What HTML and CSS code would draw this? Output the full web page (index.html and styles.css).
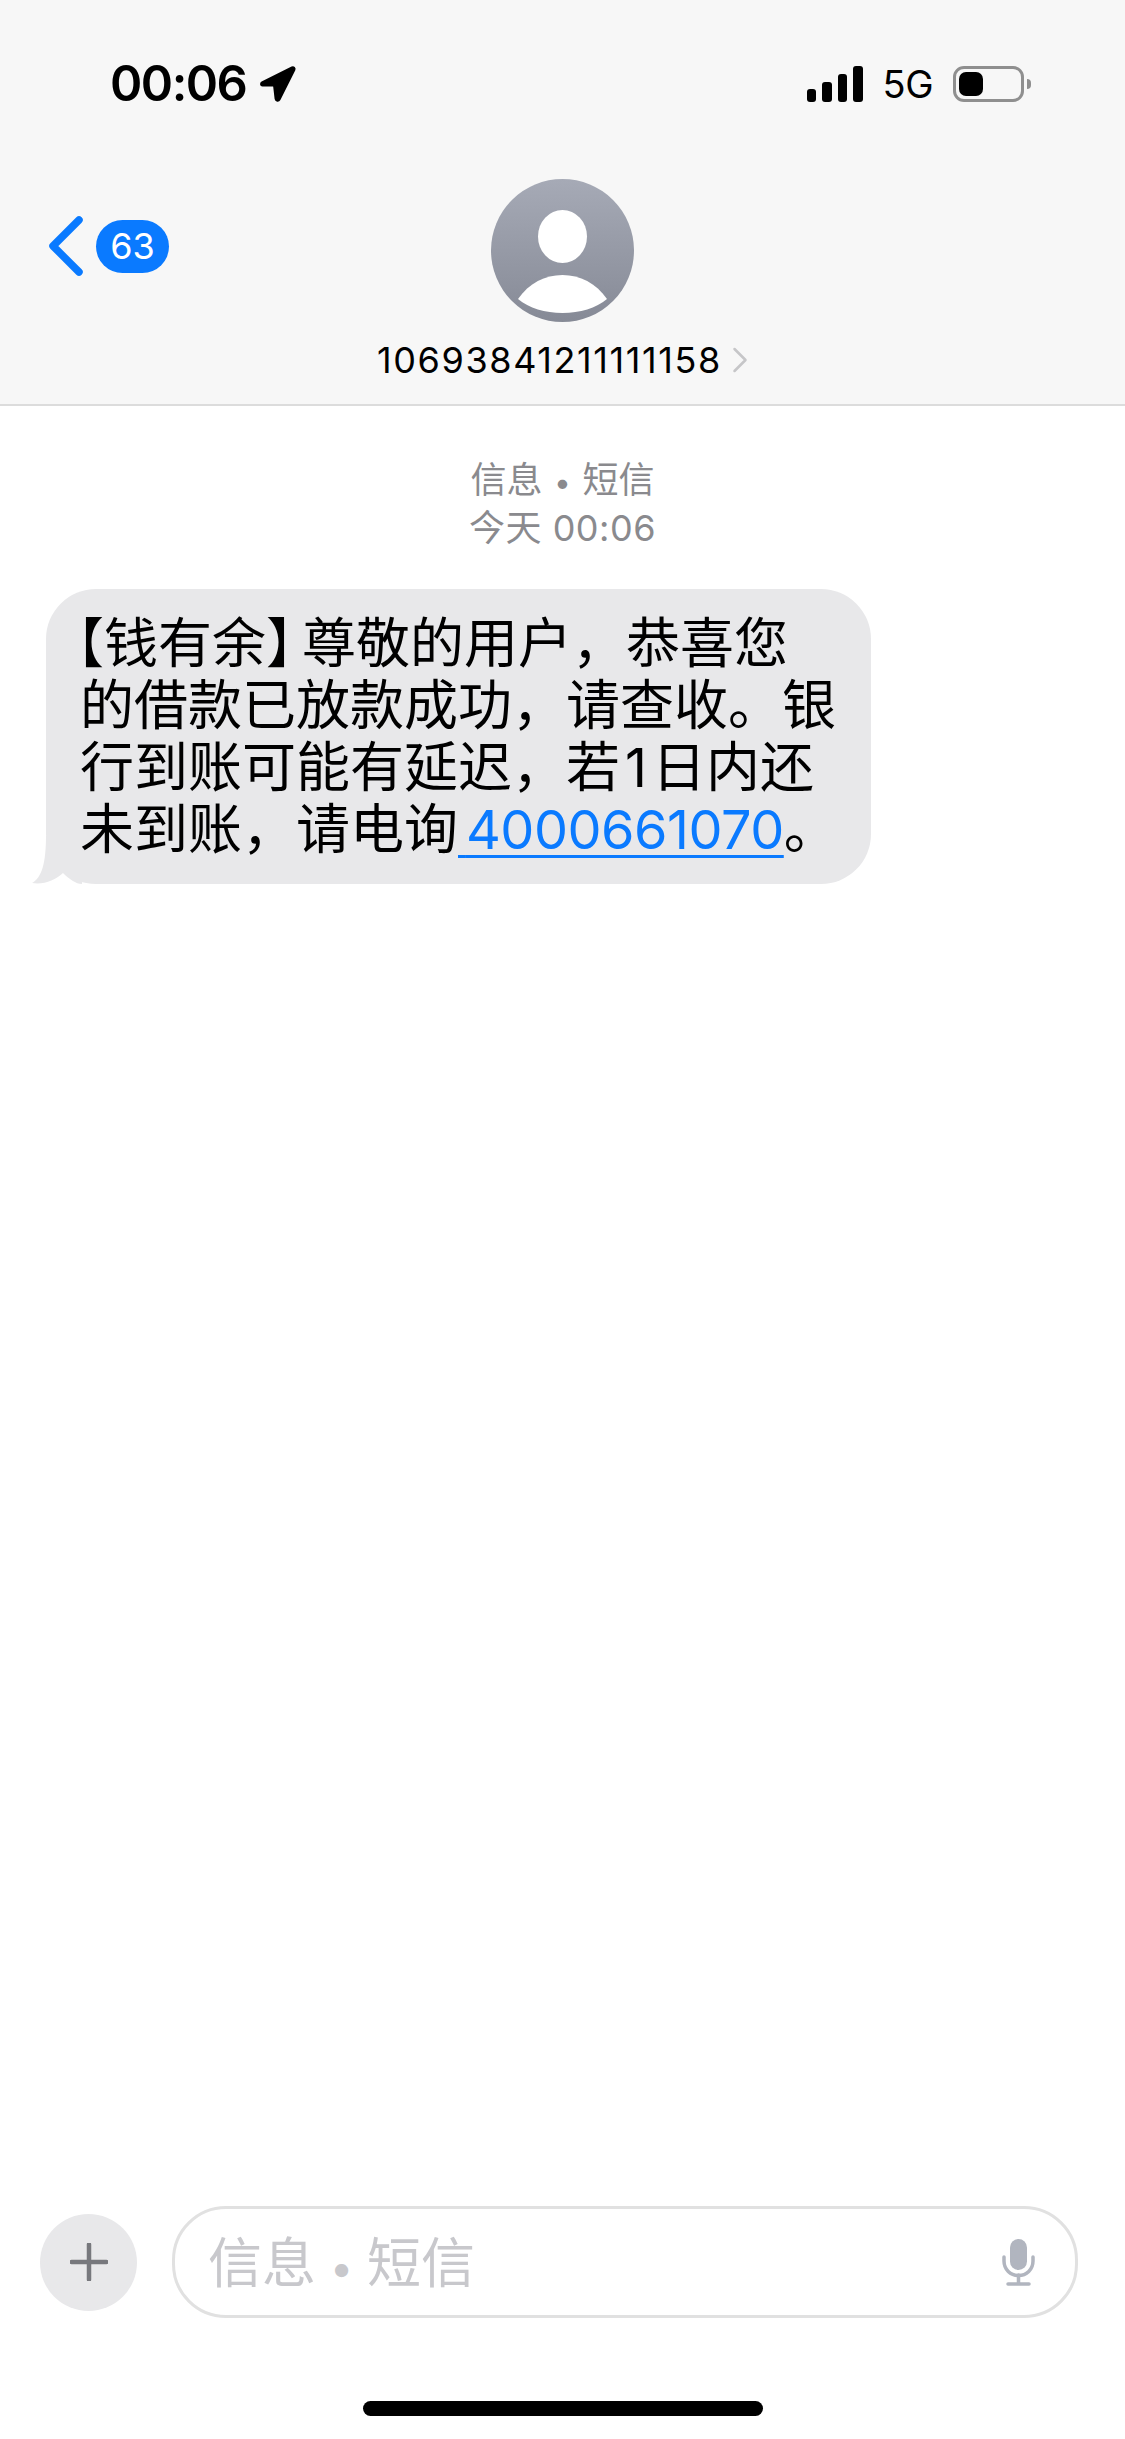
FILE: index.html
```html
<!DOCTYPE html>
<html lang="zh-CN">
<head>
<meta charset="utf-8">
<title>信息</title>
<link rel="stylesheet" href="styles.css">
</head>
<body>
<div class="screen">
  <header class="top">
    <div class="status">
      <div class="status-left">
        <span class="time">00:06</span>
        <svg class="loc" viewBox="0 0 37 36"><path d="M3 16.500 33 1.500c1.600-.8 3.100.8 2.400 2.400L20.500 33.500c-1 2-3.600 1.500-3.900-.6l-1.400-12.200c-.1-.8-.7-1.300-1.500-1.400L3.500 19.500c-1.700-.2-2-2.200-.5-3Z" stroke="#000" stroke-width="2" stroke-linejoin="round"/></svg>
      </div>
      <div class="status-right">
        <div class="signal"><i class="bar b1"></i><i class="bar b2"></i><i class="bar b3"></i><i class="bar b4"></i></div>
        <span class="net">5G</span>
        <div class="battery"><div class="cell"><div class="charge"></div></div><div class="nub"></div></div>
      </div>
    </div>
    <div class="nav">
      <div class="back">
        <svg class="chev" viewBox="0 0 35 60"><path d="M31 4 5 30l26 26" fill="none" stroke="#0a7aff" stroke-width="7.500" stroke-linecap="round" stroke-linejoin="round"/></svg>
        <span class="badge">63</span>
      </div>
      <div class="contact">
        <svg class="avatar" viewBox="0 0 143 143">
          <defs><linearGradient id="av" x1="0" y1="0" x2="0" y2="1"><stop offset="0" stop-color="#a6aab6"/><stop offset="1" stop-color="#868a96"/></linearGradient></defs>
          <circle cx="71.500" cy="71.500" r="71.500" fill="url(#av)"/>
          <ellipse cx="71.500" cy="57.500" rx="24.500" ry="26.500" fill="#fff"/>
          <path d="M27 120C38 104 54 96 71.500 96S105 104 116 120C105 129 89 134 71.500 134S38 129 27 120Z" fill="#fff"/>
        </svg>
        <div class="name-row">
          <span class="name">10693841211111158</span>
          <svg class="name-chev" viewBox="0 0 16 26"><path d="M2.500 2 13.500 13 2.500 24" fill="none" stroke="#c6c6c8" stroke-width="2.500" stroke-linecap="round" stroke-linejoin="round"/></svg>
        </div>
      </div>
      <div class="nav-end"></div>
    </div>
  </header>
  <main class="thread">
    <div class="stamp">
      <div>信息<span class="sep">•</span>短信</div>
      <div class="stamp-time">今天 00:06</div>
    </div>
    <div class="bubble">
      <svg class="tail" viewBox="0 0 50 50"><path d="M14 2C14 28 10 44 0 49 12 51 23 46 31 39 37 45 44 50 50 50V2Z" fill="#e8e8ea"/></svg>
      <p class="msg"><span class="open">【</span>钱有余<span class="close">】</span>尊敬的用户，恭喜您<br>的借款已放款成功，请查收。银<br>行到账可能有延迟，若<span class="digit">1</span>日内还<br>未到账，请电询<a class="link" href="#"><span class="gap">&nbsp;</span>4000661070</a>。</p>
    </div>
  </main>
  <footer class="composer">
    <div class="input-row">
      <div class="plus"><svg class="plus-ico" viewBox="0 0 38 38"><path d="M19 1.500v35M1.500 19h35" stroke="#77787d" stroke-width="4.500" stroke-linecap="round" fill="none"/></svg></div>
      <div class="field">
        <span class="placeholder">信息<span class="sep-large">•</span>短信</span>
        <svg class="mic" viewBox="0 0 33 47">
          <rect x="8" y="0" width="17" height="31" rx="8.500" fill="#b1b5bf"/>
          <path d="M2 18v4c0 8.500 6.500 14.500 14.500 14.500S31 30.500 31 22v-4" fill="none" stroke="#b1b5bf" stroke-width="3.500" stroke-linecap="round"/>
          <path d="M16.500 36v8M6 45h21" fill="none" stroke="#b1b5bf" stroke-width="3.500" stroke-linecap="round"/>
        </svg>
      </div>
    </div>
    <div class="home"></div>
  </footer>
</div>
</body>
</html>
```
FILE: styles.css
```css
* { box-sizing: border-box; }
html, body { margin: 0; padding: 0; background: #fff; }
body { font-family: "Inter", "Noto Sans CJK SC", sans-serif; color: #000; }
.screen { width: 1125px; height: 2439px; display: flex; flex-direction: column; overflow: hidden; }

.top { height: 406px; background: #f7f7f7; border-bottom: 2px solid #dcdcdc; display: flex; flex-direction: column; }
.status { display: flex; justify-content: space-between; align-items: flex-start; height: 179px; padding: 65px 94px 0 110px; }
.status-left { display: flex; align-items: center; gap: 13px; height: 38px; }
.time { font-size: 49px; font-weight: 600; line-height: 38px; letter-spacing: -1.500px; }
.loc { width: 37px; height: 36px; display: block; overflow: visible; }
.status-right { display: flex; align-items: center; height: 38px; }
.signal { display: flex; align-items: flex-end; gap: 6px; height: 36px; }
.bar { display: block; width: 9.500px; background: #000; border-radius: 3px; }
.b1 { height: 13px; }
.b2 { height: 20px; }
.b3 { height: 28px; }
.b4 { height: 36px; }
.net { font-size: 38px; line-height: 38px; margin-left: 20px; letter-spacing: -0.5px; }
.battery { display: flex; align-items: center; margin-left: 20px; }
.cell { width: 71px; height: 36px; border: 3px solid #8f8f8f; border-radius: 11px; padding: 3px; }
.charge { width: 24px; height: 24px; background: #000; border-radius: 7px; }
.nub { width: 4px; height: 10px; background: #8f8f8f; border-radius: 0 5px 5px 0; margin-left: 3px; }

.nav { display: grid; grid-template-columns: 1fr auto 1fr; }
.back { display: flex; align-items: center; gap: 13px; height: 60px; margin: 37px 0 0 48px; }
.chev { width: 35px; height: 60px; display: block; }
.badge { width: 73px; height: 53px; border-radius: 27px; background: #0a7aff; color: #fff; font-size: 36px; line-height: 53px; text-align: center; }
.contact { display: flex; flex-direction: column; align-items: center; }
.avatar { width: 143px; height: 143px; display: block; }
.name-row { display: flex; align-items: center; gap: 10px; height: 40px; margin-top: 18px; }
.name { font-size: 36px; line-height: 40px; letter-spacing: 1.600px; }
.name-chev { width: 16px; height: 26px; display: block; }

.thread { flex: 1; display: flex; flex-direction: column; align-items: flex-start; }
.stamp { align-self: stretch; margin-top: 50px; text-align: center; font-size: 36px; line-height: 48px; color: #8a8a8e; }
.sep { display: inline-block; width: 40px; text-align: center; font-size: 30px; line-height: 36px; }
.stamp-time { letter-spacing: 0.500px; }
.bubble { position: relative; width: 825px; height: 295px; margin: 37px 0 0 46px; background: #e8e8ea; border-radius: 50px; padding: 24px 0 0 34px; }
.tail { position: absolute; left: -14px; bottom: 0; width: 50px; height: 50px; display: block; }
.msg { margin: 0; font-size: 54px; line-height: 62px; white-space: nowrap; position: relative; }
.open { font-feature-settings: "halt"; margin-left: -3px; }
.close { font-feature-settings: "halt"; margin-right: 9px; }
.digit { margin: 0 5px; }
.link { color: #0a7aff; text-decoration: underline; text-decoration-thickness: 3px; text-underline-offset: 6px; letter-spacing: -0.500px; }
.gap { font-size: 30px; line-height: 0; }

.composer { display: flex; flex-direction: column; }
.input-row { display: flex; align-items: center; gap: 35px; padding: 0 47px 0 40px; }
.plus { width: 97px; height: 97px; border-radius: 50%; background: #e8e8ea; display: flex; align-items: center; justify-content: center; flex: none; }
.plus-ico { width: 38px; height: 38px; display: block; }
.field { flex: 1; height: 112px; border: 3px solid #e1e1e1; border-radius: 54px; display: flex; align-items: center; justify-content: space-between; padding: 0 40px 0 33px; }
.placeholder { font-size: 54px; color: #c8c8cc; line-height: 60px; margin-top: 4px; }
.sep-large { display: inline-block; width: 51px; text-align: center; font-size: 42px; line-height: 54px; }
.mic { width: 33px; height: 47px; display: block; }
.home { align-self: center; width: 400px; height: 15px; border-radius: 8px; background: #000; margin: 83px 0 23px; }
```
